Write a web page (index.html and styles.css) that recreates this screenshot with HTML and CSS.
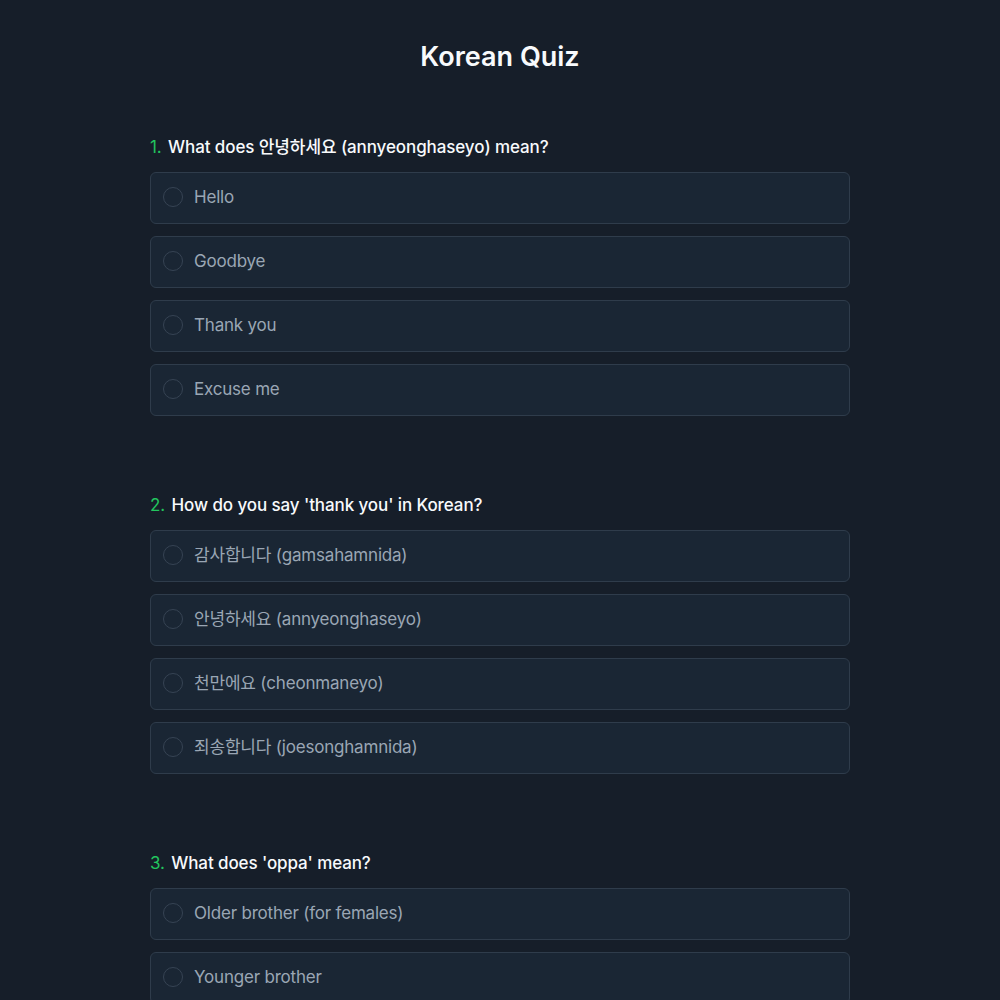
FILE: index.html
```html
<!DOCTYPE html>
<html lang="en">
<head>
<meta charset="utf-8">
<title>Korean Quiz</title>
<link rel="stylesheet" href="styles.css">
</head>
<body>
<main class="quiz">
  <h1 class="title">Korean Quiz</h1>

  <section class="question">
    <p class="prompt"><span class="num">1.</span> What does 안녕하세요 (annyeonghaseyo) mean?</p>
    <div class="options">
      <label class="option"><span class="radio"></span><span class="text">Hello</span></label>
      <label class="option"><span class="radio"></span><span class="text">Goodbye</span></label>
      <label class="option"><span class="radio"></span><span class="text">Thank you</span></label>
      <label class="option"><span class="radio"></span><span class="text">Excuse me</span></label>
    </div>
  </section>

  <section class="question">
    <p class="prompt"><span class="num">2.</span> How do you say 'thank you' in Korean?</p>
    <div class="options">
      <label class="option"><span class="radio"></span><span class="text">감사합니다 (gamsahamnida)</span></label>
      <label class="option"><span class="radio"></span><span class="text">안녕하세요 (annyeonghaseyo)</span></label>
      <label class="option"><span class="radio"></span><span class="text">천만에요 (cheonmaneyo)</span></label>
      <label class="option"><span class="radio"></span><span class="text">죄송합니다 (joesonghamnida)</span></label>
    </div>
  </section>

  <section class="question">
    <p class="prompt"><span class="num">3.</span> What does 'oppa' mean?</p>
    <div class="options">
      <label class="option"><span class="radio"></span><span class="text">Older brother (for females)</span></label>
      <label class="option"><span class="radio"></span><span class="text">Younger brother</span></label>
      <label class="option"><span class="radio"></span><span class="text">Father</span></label>
      <label class="option"><span class="radio"></span><span class="text">Friend</span></label>
    </div>
  </section>
</main>
</body>
</html>
```

FILE: styles.css
```css
html, body {
  margin: 0;
  padding: 0;
  background: #161e29;
}
body {
  font-family: Inter, "Noto Sans CJK KR", sans-serif;
  color: #f1f5f9;
}
.quiz {
  width: 700px;
  margin: 0 auto;
  padding-top: 40px;
  display: flex;
  flex-direction: column;
}
.title {
  margin: 0 0 61px;
  font-size: 27px;
  line-height: 34px;
  font-weight: 600;
  text-align: center;
  color: #f8fafc;
}
.question {
  margin-bottom: 77px;
}
.prompt {
  margin: 0 0 13px;
  font-size: 17px;
  line-height: 24px;
  font-weight: 500;
  letter-spacing: -0.1px;
  color: #f8fafc;
}
.num {
  color: #22c55e;
  font-weight: 400;
  margin-right: 2px;
}
.options {
  display: flex;
  flex-direction: column;
  gap: 12px;
}
.option {
  box-sizing: border-box;
  height: 52px;
  display: flex;
  align-items: center;
  gap: 11px;
  padding: 0 12px 2px;
  background: #1a2634;
  border: 1px solid #2f3c4b;
  border-radius: 6px;
}
.radio {
  box-sizing: border-box;
  width: 20px;
  height: 20px;
  border-radius: 50%;
  border: 1.5px solid #364353;
  flex: none;
}
.text {
  font-size: 17px;
  line-height: 24px;
  letter-spacing: -0.2px;
  color: #9aa6b4;
}
```
